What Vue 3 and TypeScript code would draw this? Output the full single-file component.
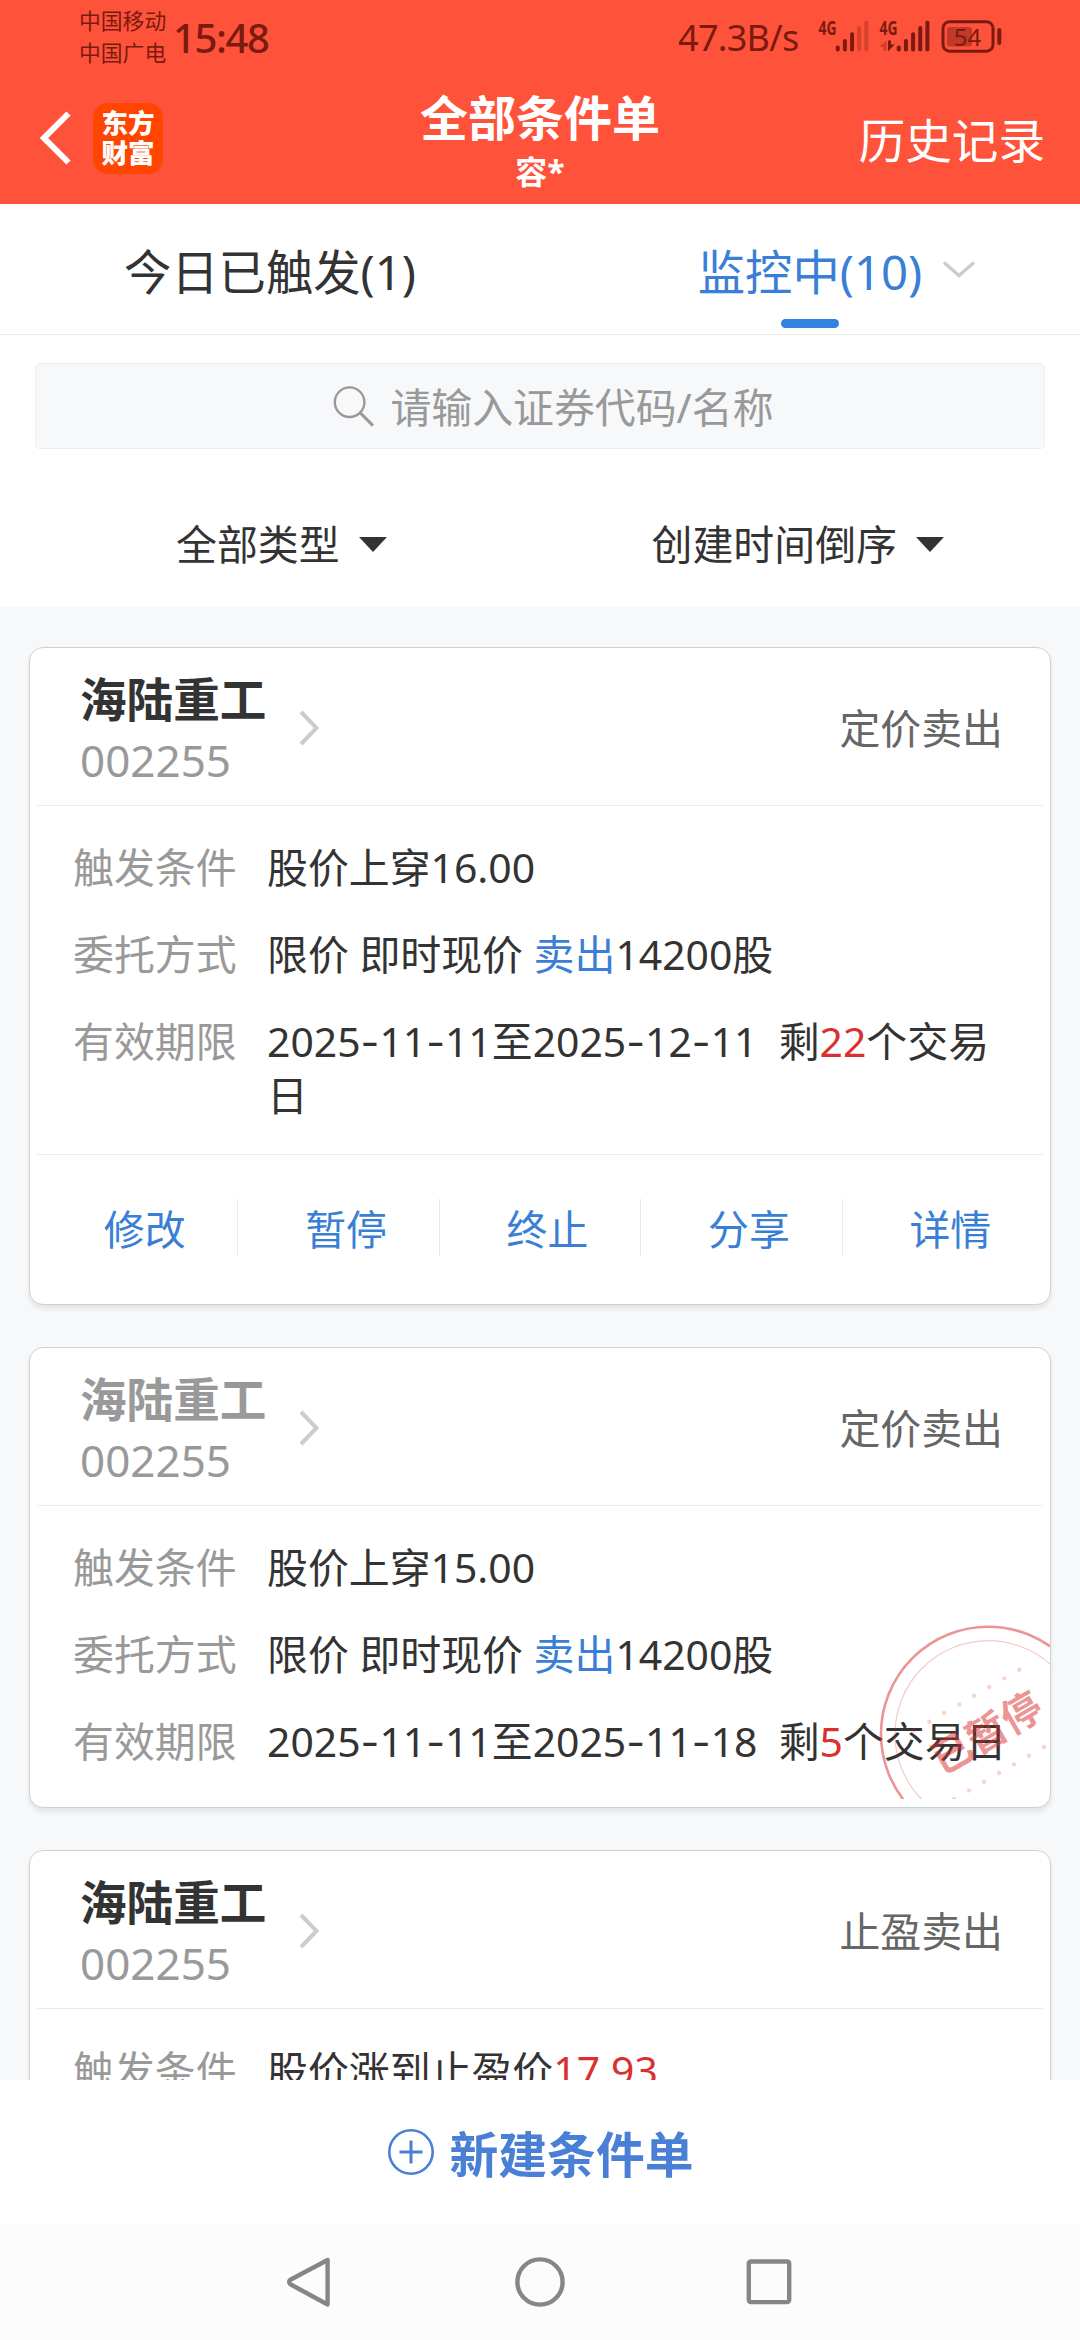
<script setup lang="ts">
interface Segment {
  text: string
  kind?: 'blue' | 'red' | 'dash'
}
interface Row {
  label: string
  value: Segment[]
}
interface Order {
  name: string
  code: string
  type: string
  paused: boolean
  rows: Row[]
  actions: string[]
}

const period = (from: string, to: string, days: string): Segment[] => {
  const split = (date: string): Segment[] =>
    date.split(/(-)/).map((text) => (text === '-' ? { text, kind: 'dash' } : { text }))
  return [
    ...split(from),
    { text: '至' },
    ...split(to),
    { text: '\u00a0 剩' },
    { text: days, kind: 'red' },
    { text: '个交易日' },
  ]
}

const entrust: Segment[] = [
  { text: '限价 即时现价 ' },
  { text: '卖出', kind: 'blue' },
  { text: '14200股' },
]

const orders: Order[] = [
  {
    name: '海陆重工',
    code: '002255',
    type: '定价卖出',
    paused: false,
    rows: [
      { label: '触发条件', value: [{ text: '股价上穿16.00' }] },
      { label: '委托方式', value: entrust },
      { label: '有效期限', value: period('2025-11-11', '2025-12-11', '22') },
    ],
    actions: ['修改', '暂停', '终止', '分享', '详情'],
  },
  {
    name: '海陆重工',
    code: '002255',
    type: '定价卖出',
    paused: true,
    rows: [
      { label: '触发条件', value: [{ text: '股价上穿15.00' }] },
      { label: '委托方式', value: entrust },
      { label: '有效期限', value: period('2025-11-11', '2025-11-18', '5') },
    ],
    actions: [],
  },
  {
    name: '海陆重工',
    code: '002255',
    type: '止盈卖出',
    paused: false,
    rows: [
      { label: '触发条件', value: [{ text: '股价涨到止盈价' }, { text: '17.93', kind: 'red' }] },
    ],
    actions: [],
  },
]

const barTops = [45.5, 39, 32.3, 26, 20.7]
const dots = [0, 1, 2, 3, 4, 5, 6, 7]
</script>

<template>
  <div class="screen">
    <header class="top">
      <div class="status">
        <div class="carriers"><span>中国移动</span><span>中国广电</span></div>
        <div class="clock">15:48</div>
        <div class="speed">47.3B/s</div>
        <svg class="signals" width="190" height="60" viewBox="815 0 190 60">
          <g fill="#7a1a10">
            <text class="net" x="818.5" y="35" textLength="18" lengthAdjust="spacingAndGlyphs">4G</text>
            <text class="net" x="879.5" y="35" textLength="18" lengthAdjust="spacingAndGlyphs">4G</text>
            <rect v-for="(t, i) in barTops" :key="'a' + i" :x="835.8 + i * 7.15" :y="t" width="3.9"
              :height="51.5 - t" rx="1.8" :opacity="i > 2 ? 0.3 : 1" />
            <rect v-for="(t, i) in barTops" :key="'b' + i" :x="896.8 + i * 7.15" :y="t" width="4"
              :height="51.5 - t" rx="1.8" />
            <path d="M886.5 40.5V51H883.5V47H879.5Z" opacity=".35" />
            <path d="M888 40.5H891V44.5H894.8L888 51.5Z" />
            <rect x="947" y="27" width="25" height="19.5" rx="3" opacity=".45" />
            <rect x="997.3" y="28" width="4" height="17" rx="2" />
            <text class="level" x="967.5" y="45.5" text-anchor="middle">54</text>
          </g>
          <rect x="943" y="21.8" width="50" height="29.4" rx="6.5" fill="none" stroke="#7a1a10" stroke-width="3" />
        </svg>
      </div>
      <div class="bar">
        <div class="side">
          <svg class="back" width="36" height="60" viewBox="0 0 36 60">
            <path d="M30.5 5.5L6 30L30.5 54.5" fill="none" stroke="#fff" stroke-width="6" />
          </svg>
          <div class="logo"><span>东方</span><span>财富</span></div>
        </div>
        <div class="heading">
          <div class="title">全部条件单</div>
          <div class="user">容*</div>
        </div>
        <div class="side right">历史记录</div>
      </div>
    </header>

    <nav class="tabs">
      <div class="tab">今日已触发(1)</div>
      <div class="tab active">
        监控中(10)
        <svg class="down" width="34" height="20" viewBox="0 0 34 20">
          <path d="M2 2.5L17 15.5L32 2.5" fill="none" stroke="#ccc" stroke-width="3.4" />
        </svg>
      </div>
    </nav>

    <section class="search">
      <div class="field">
        <svg width="42" height="42" viewBox="0 0 42 42" fill="none" stroke="#999" stroke-width="2.4">
          <circle cx="16.6" cy="17.2" r="14.8" />
          <path d="M27 27.6L40 40.6" stroke-width="3" />
        </svg>
        <span>请输入证券代码/名称</span>
      </div>
    </section>

    <section class="filters">
      <div class="filter">全部类型<i class="caret"></i></div>
      <div class="filter sort">创建时间倒序<i class="caret"></i></div>
    </section>

    <main class="list">
      <article v-for="(order, n) in orders" :key="n" class="card">
        <div class="card-head">
          <div class="stock">
            <div class="name" :class="{ muted: order.paused }">{{ order.name }}</div>
            <div class="code">{{ order.code }}</div>
          </div>
          <svg class="arrow" width="22" height="38" viewBox="0 0 22 38">
            <path d="M3 3L18.5 19L3 35" fill="none" stroke="#ccc" stroke-width="4" />
          </svg>
          <div class="type">{{ order.type }}</div>
        </div>
        <div class="rows">
          <div v-for="row in order.rows" :key="row.label" class="row">
            <div class="label">{{ row.label }}</div>
            <div class="value"><span v-for="(s, i) in row.value" :key="i" :class="s.kind">{{ s.text }}</span></div>
          </div>
        </div>
        <div v-if="order.actions.length" class="actions">
          <div v-for="a in order.actions" :key="a" class="action"><span>{{ a }}</span></div>
        </div>
        <svg v-if="order.paused" class="stamp" width="174" height="177" viewBox="0 0 174 177">
          <g fill="none" stroke="#d92b2b">
            <circle cx="112.3" cy="112" r="107.3" stroke-width="2.6" opacity=".5" />
            <circle cx="112.3" cy="112" r="93.3" stroke-width="1.2" opacity=".25" />
          </g>
          <g fill="#d92b2b" opacity=".2">
            <circle v-for="d in dots" :key="'t' + d" :cx="143.3 - d * 15" :cy="47.7 + d * 8.67" r="2.2" />
            <circle v-for="d in dots" :key="'u' + d" :cx="168 - d * 15" :cy="125 + d * 8.67" r="2.2" />
          </g>
          <text class="stamp-text" x="0" y="0" text-anchor="middle" transform="translate(110.8 111) rotate(-30) translate(0 14.5)">已暂停</text>
        </svg>
      </article>
    </main>

    <footer class="create">
      <svg width="48" height="48" viewBox="0 0 48 48" fill="none" stroke="#4a7fd6" stroke-width="2.6">
        <circle cx="24" cy="24" r="21.7" />
        <path d="M24 12.5V35.5M12.5 24H35.5" stroke-width="3" />
      </svg>
      <span>新建条件单</span>
    </footer>

    <div class="system">
      <svg width="520" height="60" viewBox="280 2252 520 60" fill="none" stroke="#868686" stroke-width="4.4" stroke-linejoin="round">
        <path d="M327.6 2260V2304.5L290.4 2284.2Q287.8 2282 290.4 2279.8Z" />
        <circle cx="540" cy="2282" r="22.6" />
        <rect x="748.8" y="2261.5" width="40.4" height="40.6" rx="2" />
      </svg>
    </div>
  </div>
</template>

<style>
body {
  margin: 0;
}
</style>

<style scoped>
.screen {
  width: 1080px;
  height: 2340px;
  overflow: hidden;
  display: flex;
  flex-direction: column;
  background: #fff;
  color: #333;
  font-family: "Noto Sans", "Noto Sans CJK SC", sans-serif;
  font-size: 40.9px;
  line-height: 54px;
}
.top {
  height: 204px;
  flex: none;
  background: #ff523b;
  color: #fff;
}
.status {
  height: 74px;
  display: flex;
  align-items: center;
  color: #7a1a10;
}
.carriers {
  margin-left: 79px;
  width: 94px;
  display: flex;
  flex-direction: column;
  font-size: 21.8px;
  line-height: 32px;
}
.clock {
  width: 505px;
  font-size: 40px;
  font-weight: 500;
  letter-spacing: -1.4px;
  padding-top: 1px;
}
.speed {
  width: 137px;
  font-size: 36px;
  letter-spacing: -0.7px;
  padding-top: 1px;
}
.signals {
  margin-bottom: 14px;
}
.net {
  font-size: 20px;
  font-weight: 700;
}
.level {
  font-size: 24px;
}
.bar {
  height: 130px;
  display: flex;
}
.side {
  width: 390px;
  display: flex;
  align-items: center;
  height: 128px;
}
.side.right {
  justify-content: flex-end;
  box-sizing: border-box;
  padding: 0 35px 0 0;
  height: 132px;
  font-size: 46.6px;
}
.back {
  margin-left: 38px;
}
.logo {
  margin-left: 19px;
  width: 70px;
  height: 71px;
  border-radius: 15px;
  background: #ff4500;
  display: flex;
  flex-direction: column;
  align-items: center;
  justify-content: center;
  font-size: 26.5px;
  font-weight: 900;
  line-height: 30px;
}
.heading {
  width: 300px;
  text-align: center;
  font-weight: 700;
}
.title {
  font-size: 48px;
  line-height: 60px;
  margin-top: 14px;
}
.user {
  font-size: 32px;
  line-height: 40px;
  margin-top: 4px;
}
.tabs {
  height: 130px;
  flex: none;
  display: flex;
  border-bottom: 1px solid #ebebeb;
  font-size: 47.3px;
  line-height: 135px;
}
.tab {
  flex: 1;
  text-align: center;
  position: relative;
}
.tab.active {
  color: #3a7fd5;
}
.tab.active::after {
  content: "";
  position: absolute;
  left: 241px;
  top: 115px;
  width: 58px;
  height: 9px;
  border-radius: 4.5px;
  background: #3382e1;
}
.down {
  position: absolute;
  left: 402px;
  top: 56px;
}
.search {
  flex: none;
  padding: 28px 35px 0;
}
.field {
  height: 84px;
  border: 1px solid #eee;
  border-radius: 5px;
  background: #f7f8fa;
  display: flex;
  align-items: center;
  justify-content: center;
  gap: 15px;
  color: #999;
  padding-left: 27px;
}
.field span {
  padding-top: 1px;
}
.filters {
  height: 158px;
  flex: none;
  display: flex;
}
.filter {
  display: flex;
  align-items: center;
  height: 190px;
  margin-left: 176px;
}
.filter.sort {
  margin-left: 265px;
}
.caret {
  margin-left: 19px;
  border: 14.5px solid transparent;
  border-top: 15px solid #333;
  border-bottom: 0;
}
.list {
  flex: 1;
  min-height: 0;
  overflow: hidden;
  background: #f7f8fa;
  padding: 40px 29px 0;
}
.card {
  position: relative;
  background: #fff;
  border: 1px solid #cfd0d2;
  border-radius: 14px;
  margin-bottom: 42px;
  padding: 0 7px;
  box-shadow: 0 4px 5px rgba(0, 0, 0, 0.08);
}
.card-head {
  height: 157px;
  border-bottom: 1px solid #ebebeb;
  display: flex;
  align-items: center;
}
.stock {
  margin-left: 43px;
  width: 218px;
}
.name {
  font-size: 46.6px;
  font-weight: 700;
  line-height: 62px;
  margin-top: 5px;
}
.name.muted,
.code,
.label {
  color: #999;
}
.code {
  font-size: 44px;
  line-height: 60px;
}
.arrow {
  margin-top: 2px;
}
.type {
  margin-left: auto;
  margin-right: 40px;
  padding-top: 3px;
  color: #666;
}
.rows {
  padding: 34px 0 39px 36px;
}
.rows:has(+ .actions) {
  padding-bottom: 32px;
}
.row {
  display: flex;
  margin-bottom: 33px;
}
.row:last-child {
  margin-bottom: 0;
}
.label {
  width: 194px;
  flex: none;
}
.value {
  width: 745px;
}
.blue {
  color: #3a7fd5;
}
.red {
  color: #d8312f;
}
.dash {
  font-family: Inter, sans-serif;
  line-height: 1;
}
.actions {
  height: 149px;
  border-top: 1px solid #ebebeb;
  display: flex;
  align-items: center;
}
.action {
  flex: 1;
  height: 57px;
  line-height: 60px;
  margin-top: -4px;
  text-align: center;
  padding-left: 15px;
  color: #3a7fd5;
  border-right: 1px solid #e8e8e8;
}
.action:last-child {
  border-right: 0;
}
.stamp {
  position: absolute;
  right: 0;
  bottom: 8px;
}
.stamp-text {
  font-size: 40px;
  font-weight: 700;
  fill: rgba(217, 43, 43, 0.5);
}
.create {
  height: 144px;
  flex: none;
  background: #fff;
  display: flex;
  align-items: center;
  justify-content: center;
  gap: 15px;
  color: #4a7fd6;
  font-size: 48.8px;
  font-weight: 700;
}
.create span {
  padding-top: 3px;
}
.system {
  height: 116px;
  flex: none;
  background: #fcfcfc;
  display: flex;
  align-items: center;
  justify-content: center;
}
</style>
